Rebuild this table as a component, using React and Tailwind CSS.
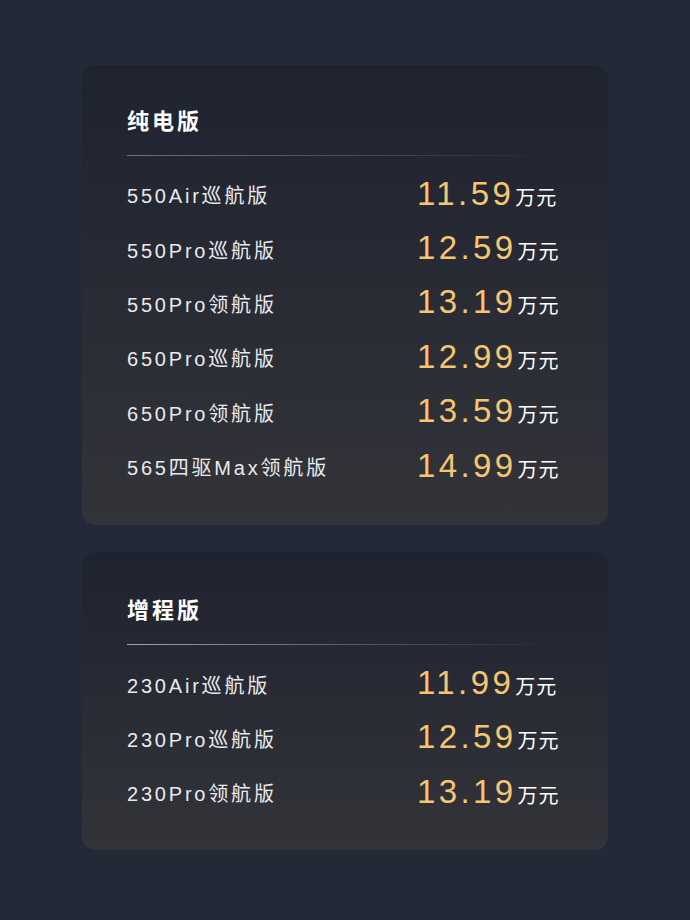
export default function App() {
  const ev = [
    ["550Air巡航版", "11.59"],
    ["550Pro巡航版", "12.59"],
    ["550Pro领航版", "13.19"],
    ["650Pro巡航版", "12.99"],
    ["650Pro领航版", "13.59"],
    ["565四驱Max领航版", "14.99"],
  ];
  const erev = [
    ["230Air巡航版", "11.99"],
    ["230Pro巡航版", "12.59"],
    ["230Pro领航版", "13.19"],
  ];
  const font = { fontFamily: '"Liberation Sans", "Noto Sans CJK SC", sans-serif' };
  const Card = ({ title, rows, light }) => (
    <div
      className={
        "w-[526px] rounded-[14px] bg-gradient-to-b from-[#1f2330] to-[#333439] pl-[45px] pr-[20px] " +
        (light ? "pt-[47px] pb-[28px]" : "pt-[45px] pb-[30px]")
      }
    >
      <div className="text-[22px] leading-[24px] font-bold tracking-[3px] text-white">{title}</div>
      <div
        className={
          "mt-[21px] h-px w-[428px] bg-gradient-to-r " +
          (light ? "from-[#a3a5ad] via-[#5a5e6c] to-transparent" : "from-[#6c6f82] via-[#4a4d5c] to-transparent")
        }
      />
      <div className="mt-[13px]">
        {rows.map(([name, price]) => (
          <div key={name} className="flex h-[54.4px] items-center whitespace-nowrap">
            <div className="w-[290px] shrink-0 text-[20px] leading-none tracking-[2.8px] text-[#e9eaee]">{name}</div>
            <div className="mb-[6px] flex shrink-0 items-baseline">
              <span className="text-[33px] leading-none tracking-[3.4px] text-[#f5c571]">{price}</span>
              <span className="ml-[1px] text-[20px] leading-none tracking-[1px] text-white">万元</span>
            </div>
          </div>
        ))}
      </div>
    </div>
  );
  return (
    <div className="min-h-[920px] w-[690px] bg-[#232937] pt-[65px] flex flex-col items-center gap-[27px]" style={font}>
      <Card title="纯电版" rows={ev} />
      <Card title="增程版" rows={erev} light />
    </div>
  );
}
